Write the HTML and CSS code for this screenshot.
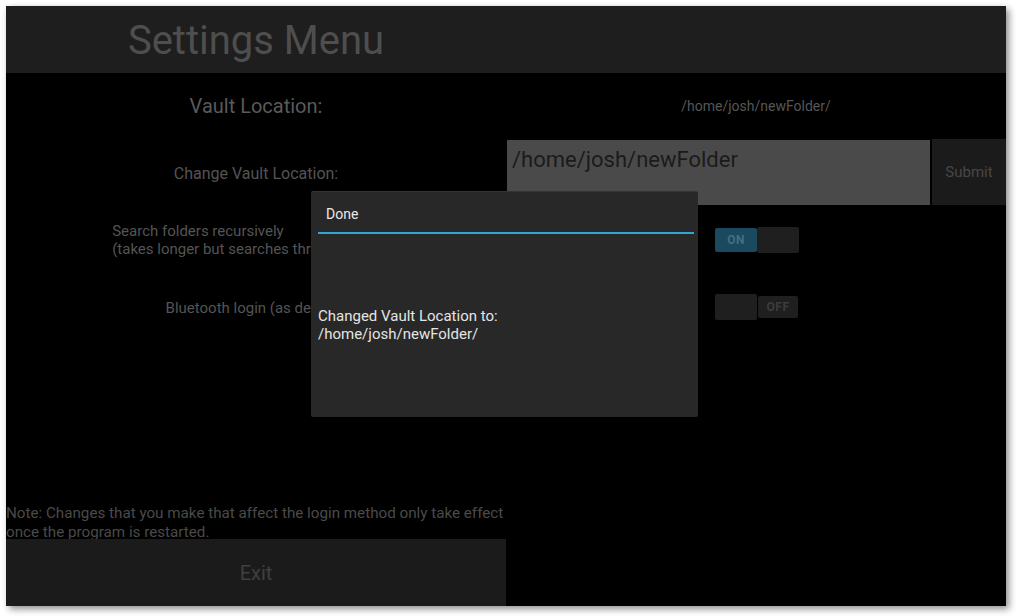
FILE: index.html
```html
<!DOCTYPE html>
<html>
<head>
<meta charset="utf-8">
<link rel="stylesheet" href="styles.css">
</head>
<body>
<div class="window">
  <div class="grid">
    <div class="header">
      <div class="title">Settings Menu</div>
    </div>

    <div class="cell label-lg">Vault Location:</div>
    <div class="cell path">/home/josh/newFolder/</div>

    <div class="cell label change">Change Vault Location:</div>
    <div class="input-row">
      <div class="text-input">/home/josh/newFolder</div>
      <div class="btn submit">Submit</div>
    </div>

    <div class="cell label shift1"><div class="multi">Search folders recursively<br>(takes longer but searches through folders)</div></div>
    <div class="cell shift1">
      <div class="switch on"><span class="track-text">ON</span><span class="thumb"></span></div>
    </div>

    <div class="cell label shift2">Bluetooth login (as default)</div>
    <div class="cell shift1">
      <div class="switch off"><span class="thumb"></span><span class="track-text">OFF</span></div>
    </div>

    <div class="spacer"></div>

    <div class="note">Note: Changes that you make that affect the login method only take effect once the program is restarted.</div>
    <div class="empty"></div>

    <div class="btn exit">Exit</div>
    <div class="empty"></div>
  </div>

  <div class="popup">
    <div class="popup-title">Done</div>
    <div class="popup-sep"></div>
    <div class="popup-content">
      <div class="popup-text">Changed Vault Location to:<br>/home/josh/newFolder/</div>
    </div>
  </div>
</div>
</body>
</html>
```

FILE: styles.css
```css
html, body {
  margin: 0;
  padding: 0;
  background: #ffffff;
}
body {
  width: 1016px;
  height: 616px;
  overflow: hidden;
  font-family: Roboto, "Noto Sans", sans-serif;
}
.window {
  position: relative;
  margin: 6px 0 0 6px;
  width: 1000px;
  height: 600px;
  background: #000;
  box-shadow: 3px 3px 7px rgba(0, 0, 0, 0.45);
}
.grid {
  display: grid;
  grid-template-columns: 500px 500px;
  grid-template-rows: repeat(9, 1fr);
  height: 600px;
}
.header {
  grid-column: 1 / 3;
  background: #1e1e1e;
  display: grid;
  grid-template-columns: 500px 500px;
  align-items: center;
}
.title {
  font-size: 40px;
  color: #4e4e4e;
  text-align: center;
  padding-top: 3px;
}
.cell {
  display: flex;
  align-items: center;
  justify-content: center;
}
.shift1 {
  padding-top: 2px;
}
.shift2 {
  padding-top: 4px;
}
.label-lg {
  font-size: 20px;
  color: #5a5a5a;
}
.path {
  font-size: 14px;
  color: #565656;
}
.label {
  font-size: 15px;
  color: #545454;
}
.label.change {
  font-size: 16px;
  padding-top: 2px;
}
.multi {
  text-align: left;
  line-height: 18px;
  white-space: nowrap;
}
.input-row {
  display: flex;
  gap: 2px;
  padding: 0 0 0 1px;
}
.text-input {
  flex: 0 0 423px;
  margin: 1px 0 1px 0;
  background: #4a4a4a;
  color: #1b1b1b;
  font-size: 22px;
  line-height: 26px;
  padding: 7px 5px 5px;
  box-sizing: border-box;
}
.btn {
  background: #1b1b1b;
  display: flex;
  align-items: center;
  justify-content: center;
}
.submit {
  flex: 1;
  margin-bottom: 1px;
  font-size: 15px;
  color: #474747;
}
.switch {
  display: flex;
  align-items: center;
  width: 84px;
  height: 26px;
  margin-left: 2px;
}
.switch .thumb {
  width: 42px;
  height: 26px;
  background: #1f1f1f;
  border-radius: 2px;
}
.switch .track-text {
  width: 42px;
  height: 24px;
  display: flex;
  align-items: center;
  justify-content: center;
  font-size: 12px;
  font-weight: bold;
  letter-spacing: 0.5px;
  border-radius: 2px;
}
.switch.on .track-text {
  background: #1b4a5f;
  color: #3f7088;
}
.switch.off .track-text {
  width: 40px;
  height: 22px;
  background: #1f1f1f;
  color: #3c3c3c;
  margin-left: 1px;
}
.spacer {
  grid-column: 1 / 3;
  grid-row: span 2;
}
.note {
  font-size: 15.2px;
  line-height: 19px;
  color: #4a4a4a;
  align-self: end;
  margin-bottom: -3px;
}
.exit {
  font-size: 20px;
  color: #3f3f3f;
}
.popup {
  position: absolute;
  left: 305px;
  top: 185px;
  width: 387px;
  height: 226px;
  background: #282828;
  border-top: 1px solid #343434;
  box-sizing: border-box;
  border-radius: 2px;
  display: flex;
  flex-direction: column;
  padding: 0 4px 8px 7px;
}
.popup-title {
  font-size: 14px;
  color: #e8e8e8;
  padding: 14px 0 0 8px;
  height: 26px;
  line-height: 16px;
}
.popup-sep {
  height: 2px;
  background: #33a6d3;
}
.popup-content {
  flex: 1;
  display: flex;
  align-items: center;
}
.popup-text {
  font-size: 15px;
  line-height: 18px;
  color: #e4e4e4;
  padding-top: 6px;
}
```
